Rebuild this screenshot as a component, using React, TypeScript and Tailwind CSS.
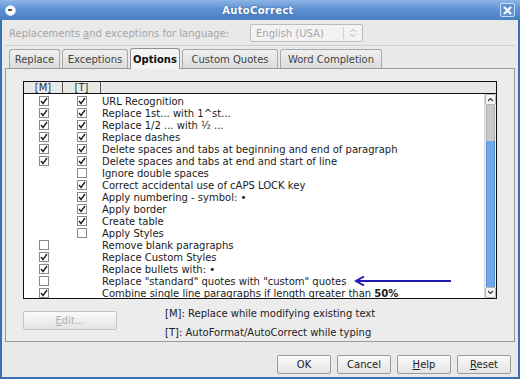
import React from 'react';

type Row = { m: boolean | null; t: boolean | null; label: React.ReactNode };

const rows: Row[] = [
  { m: true, t: true, label: 'URL Recognition' },
  { m: true, t: true, label: 'Replace 1st... with 1^st...' },
  { m: true, t: true, label: 'Replace 1/2 ... with ½ ...' },
  { m: true, t: true, label: 'Replace dashes' },
  { m: true, t: true, label: 'Delete spaces and tabs at beginning and end of paragraph' },
  { m: true, t: true, label: 'Delete spaces and tabs at end and start of line' },
  { m: null, t: false, label: 'Ignore double spaces' },
  { m: null, t: true, label: 'Correct accidental use of cAPS LOCK key' },
  { m: null, t: true, label: 'Apply numbering - symbol: •' },
  { m: null, t: true, label: 'Apply border' },
  { m: null, t: true, label: 'Create table' },
  { m: null, t: false, label: 'Apply Styles' },
  { m: false, t: null, label: 'Remove blank paragraphs' },
  { m: true, t: null, label: 'Replace Custom Styles' },
  { m: true, t: null, label: 'Replace bullets with: •' },
  { m: false, t: null, label: 'Replace "standard" quotes with "custom" quotes' },
  {
    m: true,
    t: null,
    label: (
      <>
        Combine single line paragraphs if length greater than <b>50%</b>
      </>
    ),
  },
];

function Check({ on }: { on: boolean | null }) {
  if (on === null) return null;
  return (
    <div className="w-[10px] h-[10px] bg-white border border-[#8a8a8a] flex items-center justify-center">
      {on && (
        <svg width="8" height="8" viewBox="0 0 8 8">
          <path d="M1 4 L3 6.5 L7 1" stroke="#222" strokeWidth="1.4" fill="none" />
        </svg>
      )}
    </div>
  );
}

function Btn({ children, className = '' }: { children: React.ReactNode; className?: string }) {
  return (
    <div
      className={`h-[19px] flex items-center justify-center rounded-[2px] border border-[#9c9c9c] bg-gradient-to-b from-[#fafafa] to-[#e4e4e4] text-[10px] text-[#222] ${className}`}
    >
      {children}
    </div>
  );
}

function Tab({ label, active = false, w }: { label: string; active?: boolean; w: string }) {
  return active ? (
    <div
      className={`${w} h-[21px] -mb-px flex items-center justify-center border border-b-0 border-[#8f8f8f] rounded-t-[3px] bg-[#f4f4f4] font-bold text-[10px] text-[#111] z-10`}
    >
      {label}
    </div>
  ) : (
    <div
      className={`${w} h-[19px] flex items-center justify-center border border-b-0 border-[#a8a8a8] rounded-t-[3px] bg-gradient-to-b from-[#f0f0f0] to-[#dcdcdc] text-[10px] text-[#444]`}
    >
      {label}
    </div>
  );
}

export default function App() {
  return (
    <div
      className="w-[520px] h-[379px] flex flex-col bg-[#3b6fb3] overflow-hidden"
      style={{ fontFamily: '"DejaVu Sans", Verdana, sans-serif' }}
    >
      {/* Title bar */}
      <div className="h-[20px] shrink-0 flex items-center px-[5px] bg-gradient-to-b from-[#8db5e6] via-[#5a8fd2] to-[#4a7fc4]">
        <div className="w-[11px] h-[11px] rounded-full bg-white border border-[#c8d8ee] flex items-start justify-center">
          <div className="w-[4px] h-[2px] bg-[#555] mt-[3px] mr-[2px]" />
        </div>
        <div
          className="flex-1 text-center text-white font-bold text-[10px] tracking-[0.3px]"
          style={{ textShadow: '0 0 2px #2a4f86' }}
        >
          AutoCorrect
        </div>
        <div className="w-[15px] h-[14px] rounded-[2px] border border-[#c6dbf4] bg-[#5f93d4] flex items-center justify-center">
          <svg width="9" height="9" viewBox="0 0 9 9">
            <path d="M1.5 1.5 L7.5 7.5 M7.5 1.5 L1.5 7.5" stroke="white" strokeWidth="2" strokeLinecap="round" />
          </svg>
        </div>
      </div>

      {/* Dialog body */}
      <div className="flex-1 mx-[2px] mb-[2px] bg-[#e9e9e9] flex flex-col text-[10px] text-[#222]">
        <div className="flex items-center h-[18px] mt-[4px] pl-[7px]">
          <div className="w-[241px] text-[#a6a6a6] whitespace-nowrap">
            Replacements <span className="underline">a</span>nd exceptions for language:
          </div>
          <div className="w-[113px] h-[18px] flex items-center rounded-[2px] border border-[#bdbdbd] bg-[#f3f3f3] text-[#a6a6a6] pl-[5px]">
            <span className="flex-1">English (USA)</span>
            <div className="w-px h-[12px] bg-[#cfcfcf]" />
            <svg width="14" height="12" viewBox="0 0 14 12" className="mx-[2px]">
              <path d="M4.5 5 L7 2.5 L9.5 5 M4.5 7 L7 9.5 L9.5 7" stroke="#b5b5b5" strokeWidth="1" fill="none" />
            </svg>
          </div>
        </div>
        <div className="h-px bg-[#cfcfcf] mt-[3px] mx-[3px]" />

        {/* Tabs */}
        <div className="flex items-end gap-[2px] pl-[7px] mt-[1px] h-[21px]">
          <Tab label="Replace" w="w-[51px]" />
          <Tab label="Exceptions" w="w-[66px]" />
          <Tab label="Options" w="w-[50px]" active />
          <Tab label="Custom Quotes" w="w-[96px]" />
          <Tab label="Word Completion" w="w-[102px]" />
        </div>

        {/* Panel */}
        <div className="mx-[3px] h-[274px] border border-[#9a9a9a] bg-[#ececec] flex flex-col pl-[17px] pr-[17px] pt-[12px]">
          <div className="w-[474px] border border-[#111] flex flex-col">
            {/* header */}
            <div className="h-[12px] flex text-[10px] text-[#333] bg-[#e8e8e8] border-b border-[#111]">
              <div className="w-[39px] border-r border-[#555] flex items-center justify-center">[M]</div>
              <div className="w-[38px] border-r border-[#555] flex items-center justify-center">[T]</div>
              <div className="flex-1" />
            </div>
            <div className="flex bg-white h-[204px]">
              <div className="flex-1 flex flex-col pt-[1px]">
                {rows.map((r, i) => (
                  <div key={i} className="h-[12px] flex items-center text-[10px] text-[#1a1a1a] relative">
                    <div className="w-[39px] flex justify-center">
                      <Check on={r.m} />
                    </div>
                    <div className="w-[38px] flex justify-center">
                      <Check on={r.t} />
                    </div>
                    <div className="pl-[1px] whitespace-nowrap">{r.label}</div>
                    {i === 15 && (
                      <svg width="100" height="10" viewBox="0 0 100 10" className="absolute left-[330px] top-[1px]">
                        <path d="M2 5 L97 5" stroke="#1c1cb4" strokeWidth="2" />
                        <path d="M10 0.5 L2 5 L10 9.5" stroke="#1c1cb4" strokeWidth="2" fill="none" />
                      </svg>
                    )}
                  </div>
                ))}
              </div>
              {/* scrollbar */}
              <div className="w-[12px] flex flex-col border-l border-[#d4d4d4] bg-[#f0f0f0]">
                <div className="h-[11px] flex items-center justify-center border border-[#b5b5b5] rounded-[2px] bg-[#f8f8f8]">
                  <svg width="7" height="5" viewBox="0 0 7 5">
                    <path d="M1 4 L3.5 1.5 L6 4" stroke="#333" strokeWidth="1.2" fill="none" />
                  </svg>
                </div>
                <div className="h-[36px] mx-[1px] bg-[#c9c9c9] border-x border-[#b0b0b0]" />
                <div className="flex-1 mx-[1px] bg-[#72a8e8] border-x border-[#5a8fd0]" />
                <div className="h-[11px] flex items-center justify-center border border-[#b5b5b5] rounded-[2px] bg-[#f8f8f8]">
                  <svg width="7" height="5" viewBox="0 0 7 5">
                    <path d="M1 1 L3.5 3.5 L6 1" stroke="#333" strokeWidth="1.2" fill="none" />
                  </svg>
                </div>
              </div>
            </div>
          </div>

          <div className="flex mt-[12px]">
            <Btn className="w-[94px] text-[#b0b0b0] border-[#c4c4c4]">
              <span>
                <span className="underline">E</span>dit...
              </span>
            </Btn>
            <div className="ml-[48px] -mt-[5px] flex flex-col gap-[4px] text-[10px] text-[#222]">
              <div>[M]: Replace while modifying existing text</div>
              <div>[T]: AutoFormat/AutoCorrect while typing</div>
            </div>
          </div>
        </div>

        {/* Buttons */}
        <div className="flex justify-end gap-[6px] pr-[7px] mt-[13px]">
          <Btn className="w-[54px] border-[#6a93c4]">OK</Btn>
          <Btn className="w-[54px]">Cancel</Btn>
          <Btn className="w-[54px]">
            <span>
              <span className="underline">H</span>elp
            </span>
          </Btn>
          <Btn className="w-[54px]">
            <span>
              <span className="underline">R</span>eset
            </span>
          </Btn>
        </div>
      </div>
    </div>
  );
}
